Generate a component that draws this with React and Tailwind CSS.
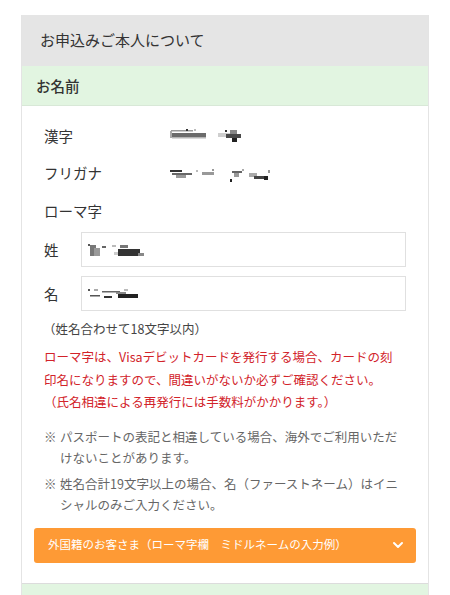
import React from 'react';
import { ChevronDown } from 'lucide-react';

// Redacted personal data, drawn as the pixelated blocks seen in the screenshot
function Redacted({ blocks, width, height }) {
  return (
    <svg width={width} height={height} viewBox={`0 0 ${width} ${height}`}>
      {blocks.map(([x, y, w, h, fill], i) => (
        <rect key={i} x={x} y={y} width={w} height={h} fill={fill} />
      ))}
    </svg>
  );
}

const KANJI = [
  [1, 2, 22, 1.5, '#9a9a9a'], [16, 1, 2, 2, '#333'], [24, 1, 2, 2, '#bbb'],
  [0, 3, 2, 7, '#aaa'], [2, 5, 34, 4, '#6b6b6b'], [2, 9, 34, 1.5, '#b5b5b5'],
  [48, 5, 12, 4, '#cfcfcf'], [55, 2, 2, 2, '#333'], [60, 2, 7, 4, '#888'],
  [56, 6, 15, 4, '#4a4a4a'], [62, 10, 5, 4, '#222'],
];
const KANA = [
  [0, 6, 12, 2, '#333'], [2, 9, 20, 2, '#666'], [6, 11, 10, 3, '#999'],
  [26, 6, 2, 2, '#bbb'], [32, 8, 12, 3, '#999'], [42, 5, 2, 2, '#999'],
  [62, 7, 10, 2, '#666'], [64, 9, 5, 4, '#999'], [60, 15, 2, 3, '#222'],
  [72, 5, 2, 2, '#aaa'], [79, 9, 8, 4, '#aaa'], [84, 12, 14, 3, '#444'],
  [94, 12, 4, 4, '#222'], [98, 6, 2, 3, '#999'],
];
const SEI = [
  [0, 1, 2, 2, '#555'], [2, 2, 6, 11, '#777'], [6, 5, 6, 8, '#999'],
  [14, 3, 4, 2, '#666'], [24, 2, 4, 2, '#bbb'], [32, 2, 8, 3, '#777'],
  [30, 6, 22, 7, '#333'], [50, 10, 6, 3, '#888'], [26, 9, 4, 3, '#ccc'],
];
const MEI = [
  [0, 2, 2, 2, '#555'], [6, 2, 4, 2, '#aaa'], [14, 4, 18, 1.5, '#666'],
  [28, 5, 10, 2, '#888'], [2, 8, 10, 1.5, '#555'], [16, 9, 8, 2, '#333'],
  [30, 7, 20, 4, '#222'], [36, 2, 4, 2, '#bbb'],
];

export default function App() {
  return (
    <div
      className="w-[450px] h-[595px] overflow-hidden bg-white pt-[15px] px-[21px] text-[#333]"
      style={{ fontFamily: '"Noto Sans CJK JP", "Noto Sans", sans-serif' }}
    >
      <div className="border border-[#e4e4e4] border-t-0">
        <div className="h-[51px] bg-[#e5e5e5] px-[18px] flex items-center text-[15px] text-[#333]">
          お申込みご本人について
        </div>
        <div className="h-[40px] bg-[#e2f5e1] border-b border-[#d8e8d7] px-[14px] flex items-center text-[14.5px] font-medium">
          お名前
        </div>

        <div className="px-[12px] pt-[11px] pb-[20px] border-b border-[#dcdcdc]">
          <div className="px-[10px]">
            <div className="h-[37px] flex items-center text-[14.5px]">
              <span className="w-[126px]">漢字</span>
              <Redacted blocks={KANJI} width={80} height={16} />
            </div>
            <div className="h-[37px] flex items-center text-[14.5px]">
              <span className="w-[126px]">フリガナ</span>
              <Redacted blocks={KANA} width={104} height={18} />
            </div>
            <div className="h-[40px] flex items-center text-[14.5px]">ローマ字</div>

            <div className="mt-[1px] flex flex-col gap-[9px]">
              <div className="flex items-center">
                <span className="w-[37px] text-[14.5px]">姓</span>
                <div className="flex-1 h-[35px] border border-[#e0e0e0] flex items-center pl-[6px]">
                  <Redacted blocks={SEI} width={58} height={14} />
                </div>
              </div>
              <div className="flex items-center">
                <span className="w-[37px] text-[14.5px]">名</span>
                <div className="flex-1 h-[35px] border border-[#e0e0e0] flex items-center pl-[6px]">
                  <Redacted blocks={MEI} width={52} height={14} />
                </div>
              </div>
            </div>

            <p className="mt-[7px] text-[12.5px] leading-[22px] text-[#444] -ml-[1px]">
              （姓名合わせて18文字以内）
            </p>

            <p className="mt-[6px] text-[12.5px] leading-[22.5px] text-[#d2232a]">
              ローマ字は、Visaデビットカードを発行する場合、カードの刻
              <br />
              印名になりますので、間違いがないか必ずご確認ください。
              <br />
              （氏名相違による再発行には手数料がかかります。）
            </p>

            <ul className="mt-[12px] text-[12.5px] leading-[21.5px] text-[#666] flex flex-col gap-[4px]">
              <li className="flex">
                <span className="w-[16px] shrink-0">※</span>
                <span>パスポートの表記と相違している場合、海外でご利用いただけないことがあります。</span>
              </li>
              <li className="flex">
                <span className="w-[16px] shrink-0">※</span>
                <span>姓名合計19文字以上の場合、名（ファーストネーム）はイニシャルのみご入力ください。</span>
              </li>
            </ul>
          </div>

          <button
            type="button"
            className="mt-[12px] w-full h-[35px] rounded-[3px] bg-[#fe9a35] flex items-center justify-between pl-[14px] pr-[10px] text-white text-[11.5px]"
          >
            <span>外国籍のお客さま（ローマ字欄　ミドルネームの入力例）</span>
            <ChevronDown className="w-[16px] h-[16px]" strokeWidth={3} />
          </button>
        </div>

        <div className="h-[20px] bg-[#e2f5e1]" />
      </div>
    </div>
  );
}
